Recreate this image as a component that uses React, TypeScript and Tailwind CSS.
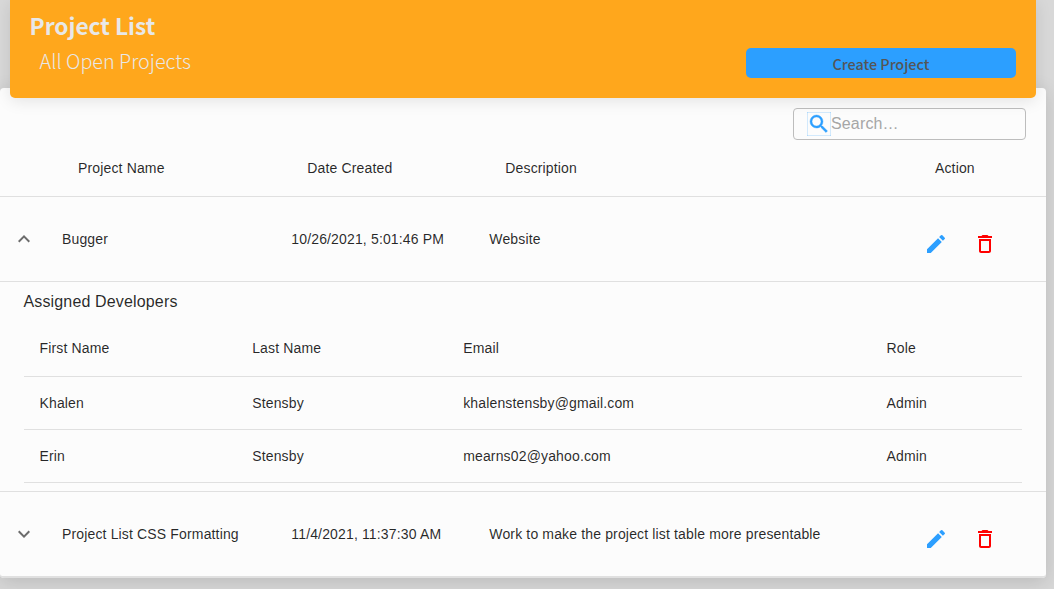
import React from "react";
import { MdEdit, MdDeleteOutline, MdExpandLess, MdExpandMore, MdSearch } from "react-icons/md";

const developers = [
  { first: "Khalen", last: "Stensby", email: "khalenstensby@gmail.com", role: "Admin" },
  { first: "Erin", last: "Stensby", email: "mearns02@yahoo.com", role: "Admin" },
];

const projectGrid = "grid grid-cols-[62px_229.3px_198px_429.7px_1fr] items-center border-[#e0e0e0]";
const devGrid = "grid grid-cols-[212.7px_211px_423.3px_1fr] items-center border-b border-[#e0e0e0] pl-[15.5px]";

function ProjectRow({ name, date, description, open }: { name: string; date: string; description: string; open?: boolean }) {
  const Chevron = open ? MdExpandLess : MdExpandMore;
  return (
    <div className={projectGrid + (open ? " h-[85px] border-b" : " h-[86px] rounded-b border-b-2")}>
      <button className="pl-3 text-[#6c6c6c]"><Chevron size={24} /></button>
      <span>{name}</span>
      <span>{date}</span>
      <span>{description}</span>
      <div className="flex gap-[25px] pl-[5px] pt-[9px]">
        <MdEdit size={24} className="text-[#2c9fff]" />
        <MdDeleteOutline size={24} className="text-[#ff0000]" />
      </div>
    </div>
  );
}

export default function App() {
  return (
    <div className="h-[589px] w-[1054px] overflow-hidden bg-[#d8d8d8] font-['Liberation_Sans',sans-serif] text-[14px] tracking-[0.15px] text-black/85">
      <header className="relative z-10 ml-[10px] flex h-[98px] w-[1026px] justify-between rounded-b-[5px] bg-[#ffa71c] pl-[19.5px] pr-5 font-['Noto_Sans_CJK_SC',sans-serif] tracking-normal text-[#e8e8e8] shadow-[0_3px_16px_rgba(0,0,0,0.10)]">
        <div>
          <h1 className="mt-2 text-[22.7px] leading-9 font-bold">Project List</h1>
          <p className="ml-[10px] text-[19.8px] leading-[34px] font-light">All Open Projects</p>
        </div>
        <button className="mt-12 h-[30px] w-[270px] rounded-[5px] bg-[#2c9fff] pt-[2px] text-[14.4px] font-medium text-[#555555]">Create Project</button>
      </header>
      <main className="-mt-[10px] h-[490px] w-[1046px] rounded bg-[#fcfcfc] pt-5 shadow-[0_4px_20px_rgba(0,0,0,0.14)]">
        <div className="ml-[793px] flex h-8 w-[233px] items-center rounded border border-[#bdbdbd] pl-[13px]">
          <MdSearch size={24} strokeWidth={0.4} stroke="currentColor" className="text-[#2c9fff]" />
          <span className="text-[16px] text-[#a6a6a6]">Search…</span>
        </div>
        <div className={projectGrid + " h-[57px] border-b pl-4"}>
          <span />
          <span>Project Name</span>
          <span>Date Created</span>
          <span>Description</span>
          <span>Action</span>
        </div>
        <ProjectRow open name="Bugger" date="10/26/2021, 5:01:46 PM" description="Website" />
        <section className="h-[210px] border-b border-[#e0e0e0] px-6 pt-2">
          <h2 className="-ml-[0.5px] h-[30px] text-[16px] leading-6">Assigned Developers</h2>
          <div className={devGrid + " h-[57px]"}>
            <span>First Name</span><span>Last Name</span><span>Email</span><span>Role</span>
          </div>
          {developers.map((d) => (
            <div key={d.email} className={devGrid + " h-[53px]"}>
              <span>{d.first}</span><span>{d.last}</span><span>{d.email}</span><span>{d.role}</span>
            </div>
          ))}
        </section>
        <ProjectRow name="Project List CSS Formatting" date="11/4/2021, 11:37:30 AM" description="Work to make the project list table more presentable" />
      </main>
    </div>
  );
}
